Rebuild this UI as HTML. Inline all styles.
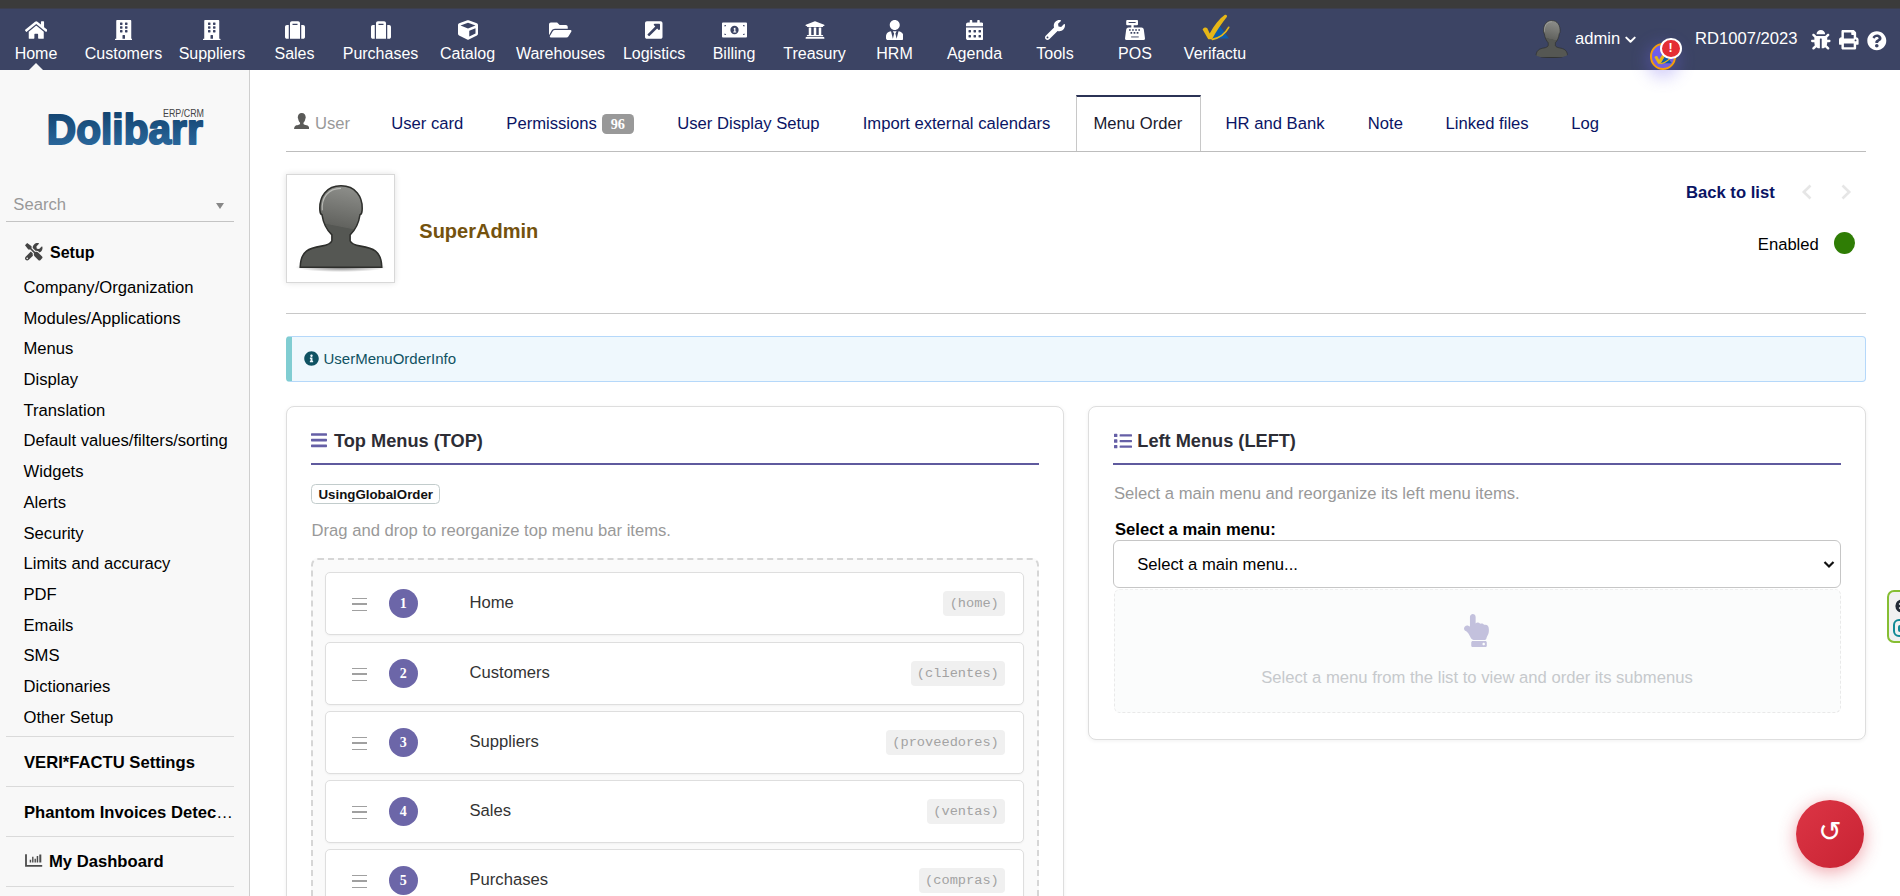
<!DOCTYPE html>
<html lang="en">
<head>
<meta charset="utf-8">
<title>Menu Order - SuperAdmin</title>
<style>
*{box-sizing:border-box;margin:0;padding:0}
html,body{width:1900px;height:896px;overflow:hidden;background:#fff}
body{font-family:"Liberation Sans",Arial,Helvetica,sans-serif;font-size:16px;color:#000;position:relative}
svg{display:block}
a{color:inherit;text-decoration:none}
ul{list-style:none}
/* ---------- top bar ---------- */
#strip{position:absolute;left:0;top:0;width:1900px;height:8px;background:#3b3b3b}
#topbar{position:absolute;left:0;top:8px;width:1900px;height:62px;background:#3c4464;z-index:5;box-shadow:inset 0 1px 0 #3c3e4e}
.tm{position:absolute;top:0;width:140px;margin-left:-70px;height:62px;text-align:center;color:#fff}
.tm svg{position:absolute;top:12px;fill:#fff}
.tm span{position:absolute;left:0;width:140px;top:36px;line-height:20px;font-size:16px;white-space:nowrap}
#homearrow{position:absolute;left:29px;top:55px;width:0;height:0;border-left:7px solid transparent;border-right:7px solid transparent;border-bottom:7px solid #f8f8f8}
.tr{position:absolute;color:#fff;line-height:20px;white-space:nowrap}
/* ---------- sidebar ---------- */
#side{position:absolute;left:0;top:70px;width:250px;height:826px;background:#f8f8f8;border-right:1px solid #cfcfcf}
#side .it{position:absolute;left:23.500px;line-height:20px;font-size:16.64px;white-space:nowrap;color:#000}
#side .hd{position:absolute;left:24px;line-height:20px;font-size:16.64px;font-weight:bold;white-space:nowrap;color:#000}
#side .sep{position:absolute;left:6px;width:228px;height:1px;background:#dadada}
/* ---------- main ---------- */
#main{position:absolute;left:250px;top:70px;width:1650px;height:826px;background:#fff}
.tab{position:absolute;top:43px;line-height:20px;font-size:16px;white-space:nowrap;color:#0a1464}
.card{position:absolute;background:#fff;border:1px solid #dedede;border-radius:8px;box-shadow:0 1px 4px rgba(0,0,0,.06)}
.ctitle{position:absolute;top:23px;line-height:22px;font-size:18.2px;font-weight:bold;color:#2d2d35;white-space:nowrap}
.cline{position:absolute;left:24px;right:24px;top:56px;height:2px;background:#5f5a9e}
.muted{position:absolute;line-height:20px;font-size:16px;color:#999;white-space:nowrap}
.row{position:absolute;left:13px;width:699px;height:63px;background:#fff;border:1px solid #dedede;border-radius:5px;box-shadow:0 1px 2px rgba(0,0,0,.04)}
.row .grip{position:absolute;left:25.800px;top:25px;width:15px;height:13px;border-top:1.5px solid #a0a0a0;border-bottom:1.5px solid #a0a0a0}
.row .grip:after{content:"";position:absolute;left:0;top:4.2px;width:15px;height:1.5px;background:#a0a0a0}
.row .num{position:absolute;left:62.800px;top:16px;width:29px;height:29px;border-radius:50%;background:#6c66a8;color:#fff;font-family:'Liberation Serif',serif;font-weight:bold;font-size:14px;line-height:29px;text-align:center}
.row .lbl{position:absolute;left:143.500px;top:20.300px;line-height:20px;font-size:16.64px;color:#333;white-space:nowrap}
.row .code{position:absolute;right:18px;top:18px;height:24.500px;padding:0 6.200px;border-radius:4px;background:#f0f0f0;color:#a3a3a3;font-family:"Liberation Mono","Courier New",monospace;font-size:13.670px;line-height:26px;white-space:nowrap}
</style>
</head>
<body>
<div id="strip"></div>
<div id="topbar">
<ul>
<li class="tm" style="left:36px"><a><svg style="margin-left:-11.25px;left:50%" viewBox="0 0 576 512" width="22.50" height="20.00"><path d="M280.37 148.26L96 300.11V464a16 16 0 0 0 16 16l112.06-.29a16 16 0 0 0 15.92-16V368a16 16 0 0 1 16-16h64a16 16 0 0 1 16 16v95.64a16 16 0 0 0 16 16.05L464 480a16 16 0 0 0 16-16V300L295.67 148.26a12.19 12.19 0 0 0-15.3 0zM571.6 251.47L488 182.56V44.05a12 12 0 0 0-12-12h-56a12 12 0 0 0-12 12v72.61L318.47 43a48 48 0 0 0-61 0L4.34 251.47a12 12 0 0 0-1.6 16.9l25.5 31A12 12 0 0 0 45.15 301l235.22-193.74a12.19 12.19 0 0 1 15.3 0L530.9 301a12 12 0 0 0 16.9-1.6l25.5-31a12 12 0 0 0-1.7-16.93z"/></svg><span>Home</span></a></li>
<li class="tm" style="left:123.5px"><a><svg style="margin-left:-8.75px;left:50%" viewBox="0 0 448 512" width="17.50" height="20.00"><path d="M436 480h-20V24c0-13.255-10.745-24-24-24H56C42.745 0 32 10.745 32 24v456H12c-6.627 0-12 5.373-12 12v20h448v-20c0-6.627-5.373-12-12-12zM128 76c0-6.627 5.373-12 12-12h40c6.627 0 12 5.373 12 12v40c0 6.627-5.373 12-12 12h-40c-6.627 0-12-5.373-12-12V76zm0 96c0-6.627 5.373-12 12-12h40c6.627 0 12 5.373 12 12v40c0 6.627-5.373 12-12 12h-40c-6.627 0-12-5.373-12-12v-40zm52 148h-40c-6.627 0-12-5.373-12-12v-40c0-6.627 5.373-12 12-12h40c6.627 0 12 5.373 12 12v40c0 6.627-5.373 12-12 12zm76 160h-64v-84c0-6.627 5.373-12 12-12h40c6.627 0 12 5.373 12 12v84zm64-172c0 6.627-5.373 12-12 12h-40c-6.627 0-12-5.373-12-12v-40c0-6.627 5.373-12 12-12h40c6.627 0 12 5.373 12 12v40zm0-96c0 6.627-5.373 12-12 12h-40c-6.627 0-12-5.373-12-12v-40c0-6.627 5.373-12 12-12h40c6.627 0 12 5.373 12 12v40zm0-96c0 6.627-5.373 12-12 12h-40c-6.627 0-12-5.373-12-12V76c0-6.627 5.373-12 12-12h40c6.627 0 12 5.373 12 12v40z"/></svg><span>Customers</span></a></li>
<li class="tm" style="left:212px"><a><svg style="margin-left:-8.75px;left:50%" viewBox="0 0 448 512" width="17.50" height="20.00"><path d="M436 480h-20V24c0-13.255-10.745-24-24-24H56C42.745 0 32 10.745 32 24v456H12c-6.627 0-12 5.373-12 12v20h448v-20c0-6.627-5.373-12-12-12zM128 76c0-6.627 5.373-12 12-12h40c6.627 0 12 5.373 12 12v40c0 6.627-5.373 12-12 12h-40c-6.627 0-12-5.373-12-12V76zm0 96c0-6.627 5.373-12 12-12h40c6.627 0 12 5.373 12 12v40c0 6.627-5.373 12-12 12h-40c-6.627 0-12-5.373-12-12v-40zm52 148h-40c-6.627 0-12-5.373-12-12v-40c0-6.627 5.373-12 12-12h40c6.627 0 12 5.373 12 12v40c0 6.627-5.373 12-12 12zm76 160h-64v-84c0-6.627 5.373-12 12-12h40c6.627 0 12 5.373 12 12v84zm64-172c0 6.627-5.373 12-12 12h-40c-6.627 0-12-5.373-12-12v-40c0-6.627 5.373-12 12-12h40c6.627 0 12 5.373 12 12v40zm0-96c0 6.627-5.373 12-12 12h-40c-6.627 0-12-5.373-12-12v-40c0-6.627 5.373-12 12-12h40c6.627 0 12 5.373 12 12v40zm0-96c0 6.627-5.373 12-12 12h-40c-6.627 0-12-5.373-12-12V76c0-6.627 5.373-12 12-12h40c6.627 0 12 5.373 12 12v40z"/></svg><span>Suppliers</span></a></li>
<li class="tm" style="left:294.5px"><a><svg style="margin-left:-10.00px;left:50%" viewBox="0 0 512 512" width="20.00" height="20.00"><path d="M128 480h256V80c0-26.5-21.5-48-48-48H176c-26.5 0-48 21.5-48 48v400zm64-384h128v32H192V96zm320 80v256c0 26.5-21.5 48-48 48h-48V128h48c26.5 0 48 21.5 48 48zM96 480H48c-26.5 0-48-21.5-48-48V176c0-26.5 21.5-48 48-48h48v352z"/></svg><span>Sales</span></a></li>
<li class="tm" style="left:380.5px"><a><svg style="margin-left:-10.00px;left:50%" viewBox="0 0 512 512" width="20.00" height="20.00"><path d="M128 480h256V80c0-26.5-21.5-48-48-48H176c-26.5 0-48 21.5-48 48v400zm64-384h128v32H192V96zm320 80v256c0 26.5-21.5 48-48 48h-48V128h48c26.5 0 48 21.5 48 48zM96 480H48c-26.5 0-48-21.5-48-48V176c0-26.5 21.5-48 48-48h48v352z"/></svg><span>Purchases</span></a></li>
<li class="tm" style="left:467.5px"><a><svg style="margin-left:-10.00px;left:50%" viewBox="0 0 512 512" width="20.00" height="20.00"><path d="M239.1 6.3l-208 78c-18.7 7-31.1 25-31.1 45v225.1c0 18.2 10.3 34.8 26.5 42.9l208 104c13.5 6.8 29.4 6.8 42.9 0l208-104c16.3-8.1 26.5-24.8 26.5-42.9V129.3c0-20-12.4-37.9-31.1-44.9l-208-78C262 2.2 250 2.2 239.1 6.3zM256 68.4l192 72v1.1l-192 78-192-78v-1.1l192-72zm32 356V275.5l160-65v133.9l-160 80z"/></svg><span>Catalog</span></a></li>
<li class="tm" style="left:560.5px"><a><svg style="margin-left:-11.25px;left:50%" viewBox="0 0 576 512" width="22.50" height="20.00"><path d="M572.694 292.093L500.27 416.248A63.997 63.997 0 0 1 444.989 448H45.025c-18.523 0-30.064-20.093-20.731-36.093l72.424-124.155A64 64 0 0 1 152 256h399.964c18.523 0 30.064 20.093 20.73 36.093zM152 224h328v-48c0-26.51-21.49-48-48-48H272l-64-64H48C21.49 64 0 85.49 0 112v278.046l69.077-118.418C86.214 242.25 117.989 224 152 224z"/></svg><span>Warehouses</span></a></li>
<li class="tm" style="left:654px"><a><svg style="margin-left:-8.75px;left:50%" viewBox="0 0 448 512" width="17.50" height="20.00"><path d="M448 80v352c0 26.51-21.49 48-48 48H48c-26.51 0-48-21.49-48-48V80c0-26.51 21.49-48 48-48h352c26.51 0 48 21.49 48 48zm-88 16H248.029c-21.313 0-32.08 25.861-16.971 40.971l31.984 31.987L67.515 364.485c-4.686 4.686-4.686 12.284 0 16.971l31.029 31.029c4.687 4.686 12.285 4.686 16.971 0l195.526-195.526 31.988 31.991C358.058 263.977 384 253.425 384 231.979V120c0-13.255-10.745-24-24-24z"/></svg><span>Logistics</span></a></li>
<li class="tm" style="left:734px"><a><svg style="margin-left:-12.50px;left:50%" viewBox="0 0 640 512" width="25.00" height="20.00"><path fill-rule="evenodd" d="M24 64h592a24 24 0 0 1 24 24v336a24 24 0 0 1-24 24H24a24 24 0 0 1-24-24V88a24 24 0 0 1 24-24zM320 150a106 106 0 1 0 0 212 106 106 0 0 0 0-212zM64 128v40a40 40 0 0 0 40-40zM576 128h-40a40 40 0 0 0 40 40zM64 384h40a40 40 0 0 0-40-40zM576 384v-40a40 40 0 0 0-40 40z"/><path d="M300 212l28-14h16v96h20v24h-76v-24h24v-56l-12 6z"/></svg><span>Billing</span></a></li>
<li class="tm" style="left:814.5px"><a><svg style="margin-left:-10.00px;left:50%" viewBox="0 0 512 512" width="20.00" height="20.00"><path d="M496 128v16a8 8 0 0 1-8 8h-24v12c0 6.627-5.373 12-12 12H60c-6.627 0-12-5.373-12-12v-12H24a8 8 0 0 1-8-8v-16a8 8 0 0 1 4.941-7.392l232-88a7.996 7.996 0 0 1 6.118 0l232 88A8 8 0 0 1 496 128zm-24 304H40c-13.255 0-24 10.745-24 24v16a8 8 0 0 0 8 8h464a8 8 0 0 0 8-8v-16c0-13.255-10.745-24-24-24zM96 192v192H60c-6.627 0-12 5.373-12 12v20h416v-20c0-6.627-5.373-12-12-12h-36V192h-64v192h-64V192h-64v192h-64V192H96z"/></svg><span>Treasury</span></a></li>
<li class="tm" style="left:894.5px"><a><svg style="margin-left:-8.75px;left:50%" viewBox="0 0 448 512" width="17.50" height="20.00"><path d="M224 256c70.7 0 128-57.3 128-128S294.7 0 224 0 96 57.3 96 128s57.3 128 128 128zm95.8 32.6L272 480l-32-136 32-56h-96l32 56-32 136-47.8-191.4C56.9 292 0 350.3 0 422.4V464c0 26.5 21.5 48 48 48h352c26.5 0 48-21.5 48-48v-41.6c0-72.1-56.9-130.4-128.2-133.8z"/></svg><span>HRM</span></a></li>
<li class="tm" style="left:974.5px"><a><svg style="margin-left:-8.75px;left:50%" viewBox="0 0 448 512" width="17.50" height="20.00"><path d="M0 464c0 26.5 21.5 48 48 48h352c26.5 0 48-21.5 48-48V192H0v272zm320-196c0-6.6 5.4-12 12-12h40c6.6 0 12 5.4 12 12v40c0 6.6-5.4 12-12 12h-40c-6.6 0-12-5.4-12-12v-40zm0 128c0-6.6 5.4-12 12-12h40c6.6 0 12 5.4 12 12v40c0 6.6-5.4 12-12 12h-40c-6.6 0-12-5.4-12-12v-40zM192 268c0-6.6 5.4-12 12-12h40c6.6 0 12 5.4 12 12v40c0 6.6-5.4 12-12 12h-40c-6.6 0-12-5.4-12-12v-40zm0 128c0-6.6 5.4-12 12-12h40c6.6 0 12 5.4 12 12v40c0 6.6-5.4 12-12 12h-40c-6.6 0-12-5.4-12-12v-40zM64 268c0-6.6 5.4-12 12-12h40c6.6 0 12 5.4 12 12v40c0 6.6-5.4 12-12 12H76c-6.6 0-12-5.4-12-12v-40zm0 128c0-6.6 5.4-12 12-12h40c6.6 0 12 5.4 12 12v40c0 6.6-5.4 12-12 12H76c-6.6 0-12-5.4-12-12v-40zM400 64h-48V16c0-8.8-7.2-16-16-16h-32c-8.800 0-16 7.200-16 16v48H160V16c0-8.800-7.200-16-16-16h-32c-8.800 0-16 7.200-16 16v48H48C21.500 64 0 85.500 0 112v48h448v-48c0-26.500-21.500-48-48-48z"/></svg><span>Agenda</span></a></li>
<li class="tm" style="left:1055px"><a><svg style="margin-left:-10.00px;left:50%" viewBox="0 0 512 512" width="20.00" height="20.00"><path d="M507.73 109.1c-2.24-9.03-13.54-12.09-20.12-5.51l-74.36 74.36-67.88-11.31-11.31-67.88 74.36-74.36c6.62-6.62 3.43-17.9-5.66-20.16-47.38-11.74-99.55.91-136.58 37.93-39.64 39.64-50.55 97.1-34.05 147.2L18.74 402.76c-24.99 24.99-24.99 65.51 0 90.5 24.99 24.99 65.51 24.99 90.5 0l213.21-213.21c50.12 16.71 107.47 5.68 147.37-34.22 37.07-37.07 49.7-89.32 37.91-136.73zM64 472c-13.25 0-24-10.75-24-24 0-13.26 10.75-24 24-24s24 10.74 24 24c0 13.25-10.75 24-24 24z"/></svg><span>Tools</span></a></li>
<li class="tm" style="left:1135px"><a><svg style="margin-left:-10.00px;left:50%" viewBox="0 0 20 20" width="20.00" height="20.00"><path fill-rule="evenodd" d="M2.200 0h9.800a1 1 0 0 1 1 1v3.300a1 1 0 0 1-1 1H8.700v2.100h7.800q2 0 2.300 2.100L20 18.400q0 1.600-1.500 1.600h-17Q0 20 0 18.400L1.200 9.500q.3-2.100 2.300-2.100h2.800V5.300H2.200a1 1 0 0 1-1-1V1a1 1 0 0 1 1-1zM3.600 2v1.100h7V2zM4.0 9.2h1.700v1.600h-1.700zM7.1 9.2h1.700v1.600h-1.700zM10.2 9.2h1.700v1.600h-1.700zM13.3 9.2h1.700v1.600h-1.700zM5.5 12.100h1.700v1.600h-1.700zM8.6 12.100h1.700v1.600h-1.700zM11.7 12.100h1.700v1.600h-1.700zM6.300 16.100v1.700h7.200v-1.700z"/><path d="M6.300 16.100h7.200v1.700H6.300z" fill-opacity=".55"/></svg><span>POS</span></a></li>
<li class="tm" style="left:1215px"><a><svg style="left:50%;margin-left:-13.30px;top:6px" viewBox="0 0 28 27" width="28.00" height="27.00"><path d="M17.400 11.500L27 24.600H10.200z" fill="#0b5cab"/><path d="M10.400 25.300Q21.500 23 26.700 13.300" fill="none" stroke="#e6b616" stroke-width="1.700" stroke-linecap="round"/><path d="M.6 15.400C1.800 13.400 3.800 13 5.300 14.200L7.700 19.400C12.300 10.800 17.300 4.800 22.600 1c1.400-1 3.200.7 2.200 2.100C19.700 9.700 14.700 16.700 10 25.300H6.300z" fill="#e6b616"/></svg><span>Verifactu</span></a></li>
</ul>
<div id="homearrow"></div>
<div style="position:absolute;left:1532.800px;top:8.500px;height:41.300px;overflow:hidden;border-radius:0 0 14px 14px/0 0 7px 7px"><svg viewBox="0 0 100 100" preserveAspectRatio="none" width="37.60" height="44.50"><defs><linearGradient id="a1g" x1="0.350" y1="0" x2="0.150" y2="1"><stop offset="0" stop-color="#8a8b87"/><stop offset="0.45" stop-color="#62635f"/><stop offset="0.46" stop-color="#555753"/><stop offset="1" stop-color="#555753"/></linearGradient><radialGradient id="a1s" cx="0.5" cy="0.5" r="0.5"><stop offset="0" stop-color="#000" stop-opacity=".55"/><stop offset="1" stop-color="#000" stop-opacity="0"/></radialGradient></defs><ellipse cx="50" cy="91" rx="48" ry="5" fill="url(#a1s)"/><path d="M50 8C35 8 27 19 28 33c.2 2.500.8 4 2.200 4.500C31.500 46 35 53 40.500 58v6c-1 3-5 4.500-11 5.500C17 71.500 8 74 7.500 91h85C92 74 83 71.500 70.500 69.500c-6-1-10-2.500-11-5.500v-6C65 53 68.500 46 69.800 37.500 71.200 37 71.800 35.500 72 33 73 19 65 8 50 8z" fill="url(#a1g)" stroke="#2e2f2c" stroke-width="1.600"/><path d="M50 10.500C36.500 10.500 29.500 20 30.500 33" fill="none" stroke="#c9cac6" stroke-width="1.200" opacity=".8"/></svg></div>
<div class="tr" style="left:1575px;top:20.800px;font-size:16.600px">admin</div>
<svg style="position:absolute;left:1624.500px;top:27.500px" width="11" height="8" viewBox="0 0 11 8"><path d="M1.300 1.600L5.500 5.800 9.700 1.600" fill="none" stroke="#fff" stroke-width="2" stroke-linecap="round" stroke-linejoin="round"/></svg>
<div style="position:absolute;left:1650px;top:35.300px;width:26px;height:26.500px;border-radius:50%;background:linear-gradient(135deg,#6a5cf0,#7a5fd8);border:2px solid #f59e0b;box-shadow:0 4px 16px 4px rgba(112,98,235,.3)"><div style="position:absolute;left:1.500px;top:2px"><svg viewBox="0 0 28 27" width="18.50" height="17.84"><path d="M17.400 11.500L27 24.600H10.200z" fill="#0b5cab"/><path d="M10.400 25.300Q21.500 23 26.700 13.300" fill="none" stroke="#e6b616" stroke-width="1.700" stroke-linecap="round"/><path d="M.6 15.400C1.800 13.400 3.800 13 5.300 14.200L7.700 19.400C12.300 10.800 17.300 4.800 22.600 1c1.400-1 3.200.7 2.200 2.100C19.700 9.700 14.700 16.700 10 25.300H6.300z" fill="#e6b616"/></svg></div></div>
<div style="position:absolute;left:1659.500px;top:29.800px;width:22px;height:21.400px;border-radius:50%;background:#e42d34;border:2px solid #fff;color:#fff;font-weight:bold;font-size:12.500px;line-height:17.500px;text-align:center">!</div>
<div class="tr" style="left:1695px;top:21px;font-size:16.600px">RD1007/2023</div>
<div style="position:absolute;left:1811px;top:22.400px"><svg viewBox="0 0 512 512" width="19.60" height="19.60" fill="#fff"><path d="M511.988 288.9c-.478 17.43-15.217 31.1-32.653 31.1H424v16c0 21.864-4.882 42.584-13.6 61.145l60.228 60.228c12.496 12.497 12.496 32.758 0 45.255-12.498 12.497-32.759 12.496-45.256 0l-54.736-54.736C345.886 467.965 314.351 480 280 480V236c0-6.627-5.373-12-12-12h-24c-6.627 0-12 5.373-12 12v244c-34.351 0-65.886-12.035-90.636-32.108l-54.736 54.736c-12.498 12.497-32.759 12.496-45.256 0-12.496-12.497-12.496-32.758 0-45.255l60.228-60.228C92.882 378.584 88 357.864 88 336v-16H32.666C15.23 320 .491 306.33.013 288.9-.484 270.816 14.028 256 32 256h56v-58.745l-46.628-46.628c-12.496-12.497-12.496-32.758 0-45.255 12.498-12.497 32.758-12.497 45.256 0L141.255 160h229.489l54.627-54.627c12.498-12.497 32.758-12.497 45.256 0 12.496 12.497 12.496 32.758 0 45.255L424 197.255V256h56c17.972 0 32.484 14.816 31.988 32.9zM257 0c-61.856 0-112 50.144-112 112h224C369 50.144 318.856 0 257 0z"/></svg></div>
<div style="position:absolute;left:1839px;top:22px"><svg viewBox="0 0 512 512" width="19.60" height="19.60" fill="#fff"><path d="M448 192V77.25c0-8.49-3.37-16.62-9.37-22.63L393.37 9.37c-6-6-14.14-9.37-22.63-9.37H96C78.33 0 64 14.33 64 32v160c-35.35 0-64 28.65-64 64v112c0 8.84 7.16 16 16 16h48v96c0 17.67 14.33 32 32 32h320c17.67 0 32-14.33 32-32v-96h48c8.84 0 16-7.16 16-16V256c0-35.35-28.65-64-64-64zm-64 256H128v-96h256v96zm0-224H128V64h192v48c0 8.84 7.16 16 16 16h48v96zm48 72c-13.25 0-24-10.75-24-24 0-13.26 10.75-24 24-24s24 10.74 24 24c0 13.25-10.75 24-24 24z"/></svg></div>
<div style="position:absolute;left:1867px;top:23px"><svg viewBox="0 0 512 512" width="19.60" height="19.60" fill="#fff"><path d="M504 256c0 136.997-111.043 248-248 248S8 392.997 8 256C8 119.083 119.043 8 256 8s248 111.083 248 248zM262.655 90c-54.497 0-89.255 22.957-116.549 63.758-3.536 5.286-2.353 12.415 2.715 16.258l34.699 26.31c5.205 3.947 12.621 3.008 16.665-2.122 17.864-22.658 30.113-35.797 57.303-35.797 20.429 0 45.698 13.148 45.698 32.958 0 14.976-12.363 22.667-32.534 33.976C247.128 238.528 216 254.941 216 296v4c0 6.627 5.373 12 12 12h56c6.627 0 12-5.373 12-12v-1.333c0-28.462 83.186-29.647 83.186-106.667 0-58.002-60.165-102-116.531-102zM256 338c-25.365 0-46 20.635-46 46 0 25.364 20.635 46 46 46s46-20.636 46-46c0-25.365-20.635-46-46-46z"/></svg></div>
</div>
<div id="side">
<svg style="position:absolute;left:39.200px;top:33.500px" width="175" height="48" viewBox="0 0 175 48"><defs><linearGradient id="lg" x1="0" y1="0" x2="0" y2="1"><stop offset="0" stop-color="#0f3d68"/><stop offset="1" stop-color="#2f6fa5"/></linearGradient></defs><text x="7.800" y="40.300" font-family="'Liberation Sans',Arial,sans-serif" font-weight="bold" font-size="43" textLength="156" lengthAdjust="spacingAndGlyphs" fill="url(#lg)" stroke="url(#lg)" stroke-width="2" stroke-linejoin="round">Dolibarr</text><text x="124" y="13.100" font-family="'Liberation Sans',Arial,sans-serif" font-size="10.500" textLength="41" lengthAdjust="spacingAndGlyphs" fill="#444">ERP/CRM</text></svg>
<div style="position:absolute;left:13.300px;top:125px;line-height:20px;font-size:16.64px;color:#999">Search</div>
<div style="position:absolute;left:216px;top:133px;width:0;height:0;border-left:4px solid transparent;border-right:4px solid transparent;border-top:6px solid #888"></div>
<div class="sep" style="top:151px;background:#c4c4c4"></div>
<div style="position:absolute;left:25px;top:173px"><svg viewBox="0 0 512 512" width="17.50" height="17.50" fill="#444"><path d="M501.1 395.7L384 278.6c-23.1-23.1-57.6-27.6-85.4-13.9L192 158.100V96L64 0 0 64l96 128h62.100l106.600 106.600c-13.600 27.800-9.200 62.300 13.900 85.400l117.100 117.100c14.600 14.600 38.200 14.600 52.700 0l52.700-52.700c14.500-14.600 14.500-38.200 0-52.700zM331.700 225c28.300 0 54.900 11 74.900 31l19.400 19.400c15.800-6.900 30.800-16.500 43.800-29.500 37.100-37.100 49.700-89.300 37.900-136.700-2.200-9-13.500-12.100-20.100-5.500l-74.400 74.400-67.900-11.300L334 98.900l74.400-74.400c6.600-6.600 3.400-17.900-5.700-20.200-47.400-11.700-99.600.9-136.600 37.900-28.500 28.500-41.900 66.100-41.200 103.600l82.100 82.100c8.100-1.900 16.500-2.900 24.700-2.900zm-103.900 82l-56.700-56.700L18.700 402.800c-25 25-25 65.500 0 90.500s65.500 25 90.500 0l123.600-123.600c-7.600-19.900-9.900-41.600-5-62.700zM64 472c-13.200 0-24-10.800-24-24 0-13.300 10.700-24 24-24s24 10.700 24 24c0 13.200-10.700 24-24 24z"/></svg></div>
<div class="hd" style="left:50px;top:173px;font-size:16px">Setup</div>
<ul>
<li class="it" style="top:207.83px"><a>Company/Organization</a></li>
<li class="it" style="top:238.55px"><a>Modules/Applications</a></li>
<li class="it" style="top:269.26px"><a>Menus</a></li>
<li class="it" style="top:299.98px"><a>Display</a></li>
<li class="it" style="top:330.69px"><a>Translation</a></li>
<li class="it" style="top:361.40px"><a>Default values/filters/sorting</a></li>
<li class="it" style="top:392.12px"><a>Widgets</a></li>
<li class="it" style="top:422.83px"><a>Alerts</a></li>
<li class="it" style="top:453.55px"><a>Security</a></li>
<li class="it" style="top:484.26px"><a>Limits and accuracy</a></li>
<li class="it" style="top:514.97px"><a>PDF</a></li>
<li class="it" style="top:545.69px"><a>Emails</a></li>
<li class="it" style="top:576.40px"><a>SMS</a></li>
<li class="it" style="top:607.12px"><a>Dictionaries</a></li>
<li class="it" style="top:637.83px"><a>Other Setup</a></li>
</ul>
<div class="sep" style="top:666px"></div>
<div class="hd" style="top:683px">VERI*FACTU Settings</div>
<div class="sep" style="top:716px"></div>
<div class="hd" style="top:733px">Phantom Invoices Detec<span style="font-weight:normal">…</span></div>
<div class="sep" style="top:766px"></div>
<div style="position:absolute;left:25px;top:783.500px"><svg width="18" height="14" viewBox="0 0 18 14"><path d="M1 .3v11.600h16.200" fill="none" stroke="#4c4c4c" stroke-width="1.800"/><path d="M4.700 5.800h1.500v2.800H4.700zM7.100 2.800h1.400v5.800H7.100zM9.500 4.700h1.400v3.900H9.500zM11.700 2h1.500v6.600h-1.500zM14.300.5h2v8.100h-2z" fill="#4c4c4c"/></svg></div>
<div class="hd" style="left:49px;top:782px">My Dashboard</div>
<div class="sep" style="top:816px"></div>
</div>
<div id="main">
<div style="position:absolute;left:36px;top:81px;width:1580px;height:1px;background:#bdbdbd"></div>
<div style="position:absolute;left:43.5px;top:43px"><svg viewBox="7 8 86 84" preserveAspectRatio="none" width="15.500" height="16.300"><path d="M50 8C35 8 27 19 28 33c.2 2.500.8 4 2.200 4.500C31.500 46 35 53 40.500 58v6c-1 3-5 4.500-11 5.500C17 71.500 8 74 7.500 91h85C92 74 83 71.500 70.500 69.500c-6-1-10-2.500-11-5.500v-6C65 53 68.500 46 69.800 37.500 71.200 37 71.800 35.500 72 33 73 19 65 8 50 8z" fill="#5a5a58"/></svg></div>
<div style="position:absolute;left:65.00px;top:43.73px;font-size:16.64px;line-height:20px;white-space:nowrap;color:#999">User</div>
<div style="position:absolute;left:141.30px;top:43.73px;font-size:16.64px;line-height:20px;white-space:nowrap;color:#0a1464">User card</div>
<div style="position:absolute;left:256.30px;top:43.73px;font-size:16.64px;line-height:20px;white-space:nowrap;color:#0a1464">Permissions</div>
<div style="position:absolute;left:352px;top:44.3px;width:31.700px;height:19.500px;border-radius:4.500px;background:#999;color:#fff;font-family:'Liberation Serif',serif;font-weight:bold;font-size:14.300px;line-height:21.500px;text-align:center">96</div>
<div style="position:absolute;left:427.30px;top:43.73px;font-size:16.64px;line-height:20px;white-space:nowrap;color:#0a1464">User Display Setup</div>
<div style="position:absolute;left:612.70px;top:43.73px;font-size:16.64px;line-height:20px;white-space:nowrap;color:#0a1464">Import external calendars</div>
<div style="position:absolute;left:826px;top:25px;width:125px;height:56px;background:#fff;border:1px solid #c8c8c8;border-top:2px solid #2b3255;border-bottom:none"></div>
<div style="position:absolute;left:843.50px;top:43.73px;font-size:16.64px;line-height:20px;white-space:nowrap;color:#1a1a2e">Menu Order</div>
<div style="position:absolute;left:975.60px;top:43.73px;font-size:16.64px;line-height:20px;white-space:nowrap;color:#0a1464">HR and Bank</div>
<div style="position:absolute;left:1117.80px;top:43.73px;font-size:16.64px;line-height:20px;white-space:nowrap;color:#0a1464">Note</div>
<div style="position:absolute;left:1195.50px;top:43.73px;font-size:16.64px;line-height:20px;white-space:nowrap;color:#0a1464">Linked files</div>
<div style="position:absolute;left:1321.30px;top:43.73px;font-size:16.64px;line-height:20px;white-space:nowrap;color:#0a1464">Log</div>
<div style="position:absolute;left:36px;top:104px;width:109px;height:109px;border:1px solid #d8d8d8;background:#fff;box-shadow:0 0 6px rgba(0,0,0,.12)"><div style="position:absolute;left:5.500px;top:2.800px"><svg viewBox="0 0 100 100" preserveAspectRatio="none" width="96.00" height="98.00"><defs><linearGradient id="a2g" x1="0.350" y1="0" x2="0.150" y2="1"><stop offset="0" stop-color="#8a8b87"/><stop offset="0.45" stop-color="#62635f"/><stop offset="0.46" stop-color="#555753"/><stop offset="1" stop-color="#555753"/></linearGradient><radialGradient id="a2s" cx="0.5" cy="0.5" r="0.5"><stop offset="0" stop-color="#000" stop-opacity=".55"/><stop offset="1" stop-color="#000" stop-opacity="0"/></radialGradient></defs><ellipse cx="50" cy="91" rx="48" ry="5" fill="url(#a2s)"/><path d="M50 8C35 8 27 19 28 33c.2 2.500.8 4 2.200 4.500C31.500 46 35 53 40.500 58v6c-1 3-5 4.500-11 5.500C17 71.500 8 74 7.500 91h85C92 74 83 71.500 70.500 69.500c-6-1-10-2.500-11-5.500v-6C65 53 68.500 46 69.800 37.500 71.200 37 71.800 35.500 72 33 73 19 65 8 50 8z" fill="url(#a2g)" stroke="#2e2f2c" stroke-width="1.600"/><path d="M50 10.500C36.500 10.500 29.500 20 30.500 33" fill="none" stroke="#c9cac6" stroke-width="1.200" opacity=".8"/></svg></div></div>
<div style="position:absolute;left:169.30px;top:148.77px;font-size:20px;line-height:24px;white-space:nowrap;font-weight:bold;color:#74520e">SuperAdmin</div>
<div style="position:absolute;left:1436.00px;top:112.53px;font-size:16.64px;line-height:20px;white-space:nowrap;font-weight:bold;color:#0a1464">Back to list</div>
<svg style="position:absolute;left:1551px;top:114px" width="12" height="16" viewBox="0 0 12 16"><path d="M9.500 1.500L2.800 8l6.700 6.500" fill="none" stroke="#e6e6e6" stroke-width="2.600"/></svg>
<svg style="position:absolute;left:1590px;top:114px" width="12" height="16" viewBox="0 0 12 16"><path d="M2.500 1.500L9.200 8l-6.700 6.500" fill="none" stroke="#e6e6e6" stroke-width="2.600"/></svg>
<div style="position:absolute;left:1507.80px;top:164.93px;font-size:16.64px;line-height:20px;white-space:nowrap;color:#000">Enabled</div>
<div style="position:absolute;left:1583.5px;top:162px;width:21px;height:22px;border-radius:50%;background:#2f7d05"></div>
<div style="position:absolute;left:36px;top:243px;width:1580px;height:1px;background:#c8c8c8"></div>
<div style="position:absolute;left:36px;top:266px;width:1580px;height:46px;background:#eff8fd;border:1px solid #b5d8fa;border-left:6px solid #80cdd2;border-radius:4px"><div style="position:absolute;left:11.800px;top:14.300px"><svg viewBox="0 0 512 512" width="15.00" height="15.00" fill="#0f5262"><path d="M256 8C119.043 8 8 119.083 8 256c0 136.997 111.043 248 248 248s248-111.003 248-248C504 119.083 392.957 8 256 8zm0 110c23.196 0 42 18.804 42 42s-18.804 42-42 42-42-18.804-42-42 18.804-42 42-42zm56 254c0 6.627-5.373 12-12 12h-88c-6.627 0-12-5.373-12-12v-24c0-6.627 5.373-12 12-12h12v-64h-12c-6.627 0-12-5.373-12-12v-24c0-6.627 5.373-12 12-12h64c6.627 0 12 5.373 12 12v100h12c6.627 0 12 5.373 12 12v24z"/></svg></div><div style="position:absolute;left:31.50px;top:11.80px;font-size:15px;line-height:20px;white-space:nowrap;color:#0f5262">UserMenuOrderInfo</div>
</div>
<div class="card" style="left:36px;top:336px;width:778px;height:520px">
<div style="position:absolute;left:24.300px;top:23.800px"><svg viewBox="0 0 448 512" width="16.00" height="18.29" fill="#655fa6"><path d="M16 132h416c8.837 0 16-7.163 16-16V76c0-8.837-7.163-16-16-16H16C7.163 60 0 67.163 0 76v40c0 8.837 7.163 16 16 16zm0 160h416c8.837 0 16-7.163 16-16v-40c0-8.837-7.163-16-16-16H16c-8.837 0-16 7.163-16 16v40c0 8.837 7.163 16 16 16zm0 160h416c8.837 0 16-7.163 16-16v-40c0-8.837-7.163-16-16-16H16c-8.837 0-16 7.163-16 16v40c0 8.837 7.163 16 16 16z"/></svg></div>
<div class="ctitle" style="left:47px">Top Menus (TOP)</div><div class="cline"></div>
<div style="position:absolute;left:24px;top:77px;height:20.400px;padding:0 5.500px 0 6.500px;border:1.600px solid #c2cccc;border-radius:4.500px;font-weight:bold;font-size:13.300px;line-height:19px;color:#111;white-space:nowrap">UsingGlobalOrder</div>
<div style="position:absolute;left:24.50px;top:113.83px;font-size:16.64px;line-height:20px;white-space:nowrap;color:#999">Drag and drop to reorganize top menu bar items.</div>
<div style="position:absolute;left:24px;top:151px;width:728px;height:400px;border:2px dashed #d6d6d6;border-radius:7px;background:#fafafa">
<ul>
<li class="row" style="top:12.00px;left:12.00px"><span class="grip"></span><span class="num">1</span><span class="lbl">Home</span><span class="code">(home)</span></li>
<li class="row" style="top:82.00px;left:12.00px"><span class="grip"></span><span class="num">2</span><span class="lbl">Customers</span><span class="code">(clientes)</span></li>
<li class="row" style="top:151.00px;left:12.00px"><span class="grip"></span><span class="num">3</span><span class="lbl">Suppliers</span><span class="code">(proveedores)</span></li>
<li class="row" style="top:220.00px;left:12.00px"><span class="grip"></span><span class="num">4</span><span class="lbl">Sales</span><span class="code">(ventas)</span></li>
<li class="row" style="top:289.00px;left:12.00px"><span class="grip"></span><span class="num">5</span><span class="lbl">Purchases</span><span class="code">(compras)</span></li>
</ul>
</div>
</div>
<div class="card" style="left:838px;top:336px;width:778px;height:333.500px">
<div style="position:absolute;left:24.500px;top:24.500px"><svg viewBox="0 0 512 512" width="18.00" height="18.00" fill="#655fa6"><path d="M80 368H16a16 16 0 0 0-16 16v64a16 16 0 0 0 16 16h64a16 16 0 0 0 16-16v-64a16 16 0 0 0-16-16zm0-320H16A16 16 0 0 0 0 64v64a16 16 0 0 0 16 16h64a16 16 0 0 0 16-16V64a16 16 0 0 0-16-16zm0 160H16a16 16 0 0 0-16 16v64a16 16 0 0 0 16 16h64a16 16 0 0 0 16-16v-64a16 16 0 0 0-16-16zm416 176H176a16 16 0 0 0-16 16v32a16 16 0 0 0 16 16h320a16 16 0 0 0 16-16v-32a16 16 0 0 0-16-16zm0-320H176a16 16 0 0 0-16 16v32a16 16 0 0 0 16 16h320a16 16 0 0 0 16-16V80a16 16 0 0 0-16-16zm0 160H176a16 16 0 0 0-16 16v32a16 16 0 0 0 16 16h320a16 16 0 0 0 16-16v-32a16 16 0 0 0-16-16z"/></svg></div>
<div class="ctitle" style="left:48.300px">Left Menus (LEFT)</div><div class="cline"></div>
<div style="position:absolute;left:25.00px;top:77.03px;font-size:16.64px;line-height:20px;white-space:nowrap;color:#999">Select a main menu and reorganize its left menu items.</div>
<label style="position:absolute;left:26.00px;top:112.93px;font-size:16.64px;line-height:20px;white-space:nowrap;font-weight:bold;color:#000">Select a main menu:</label>
<div style="position:absolute;left:24px;top:133px;width:727.500px;height:48px;border:1px solid #c6c6c6;border-radius:6px;background:#fff"><div style="position:absolute;left:23.20px;top:14.43px;font-size:16.64px;line-height:20px;white-space:nowrap;color:#000">Select a main menu...</div>
<svg style="position:absolute;right:4.500px;top:18.500px" width="12" height="9" viewBox="0 0 12 9"><path d="M1.500 2l4.500 4.500L10.500 2" fill="none" stroke="#111" stroke-width="2.200"/></svg></div>
<div style="position:absolute;left:24.500px;top:182px;width:727px;height:124px;border:1.500px dashed #e9e9e9;border-top-color:#f0f0f0;border-radius:6px;background:#fbfcfc"><div style="position:absolute;left:349.300px;top:24px"><svg viewBox="0 0 384 512" width="24.90" height="33.20" fill="#c3c1dd"><path d="M135.652 0c23.625 0 43.826 20.65 43.826 44.8v99.851c17.048-16.34 49.766-18.346 70.944 6.299 22.829-14.288 53.017-2.147 62.315 16.45C361.878 158.426 384 189.346 384 240c0 2.746-.203 13.276-.195 16 .168 61.971-31.065 76.894-38.315 123.731C343.683 391.404 333.599 400 321.786 400H150.261l-.001-.002c-18.366-.011-35.889-10.607-43.845-28.464C93.421 342.648 57.377 276.122 29.092 264 10.897 256.203.008 242.616 0 224c-.014-34.222 35.098-57.752 66.908-44.119 8.359 3.583 16.67 8.312 24.918 14.153V44.8c0-23.45 20.543-44.8 43.826-44.800zM136 416h192c13.255 0 24 10.745 24 24v48c0 13.255-10.745 24-24 24H136c-13.255 0-24-10.745-24-24v-48c0-13.255 10.745-24 24-24zm168 28c-11.046 0-20 8.954-20 20s8.954 20 20 20 20-8.954 20-20-8.954-20-20-20z"/></svg></div><div style="position:absolute;left:0;width:725px;top:77.800px;text-align:center;font-size:16.64px;line-height:20px;color:#c6c9cc">Select a menu from the list to view and order its submenus</div></div>
</div>
</div>
<div style="position:absolute;left:1887px;top:590px;width:30px;height:53px;border:2px solid #86be33;border-radius:7px;background:#f1f1f1"><svg style="position:absolute;left:5.500px;top:6.500px" width="14" height="14" viewBox="0 0 14 14"><circle cx="7" cy="7" r="6.600" fill="#222a35"/><path d="M4.300 4.300l5.400 5.400M9.700 4.300L4.300 9.700" stroke="#f1f1f1" stroke-width="1.800"/></svg><div style="position:absolute;left:4px;top:27px;width:20px;height:17.500px;border-radius:6px;border:2px solid #128a96"><div style="position:absolute;left:3px;top:3.500px;width:10px;height:7px;border-radius:2px;background:#128a96"></div></div></div>
<div style="position:absolute;left:1796px;top:800px;width:68px;height:68px;border-radius:50%;background:linear-gradient(135deg,#dc3545,#c82333);box-shadow:0 4px 18px rgba(220,53,69,.45);color:#fff;font-family:'DejaVu Sans',sans-serif;font-size:28px;line-height:64px;text-align:center">↺</div>
</body>
</html>
